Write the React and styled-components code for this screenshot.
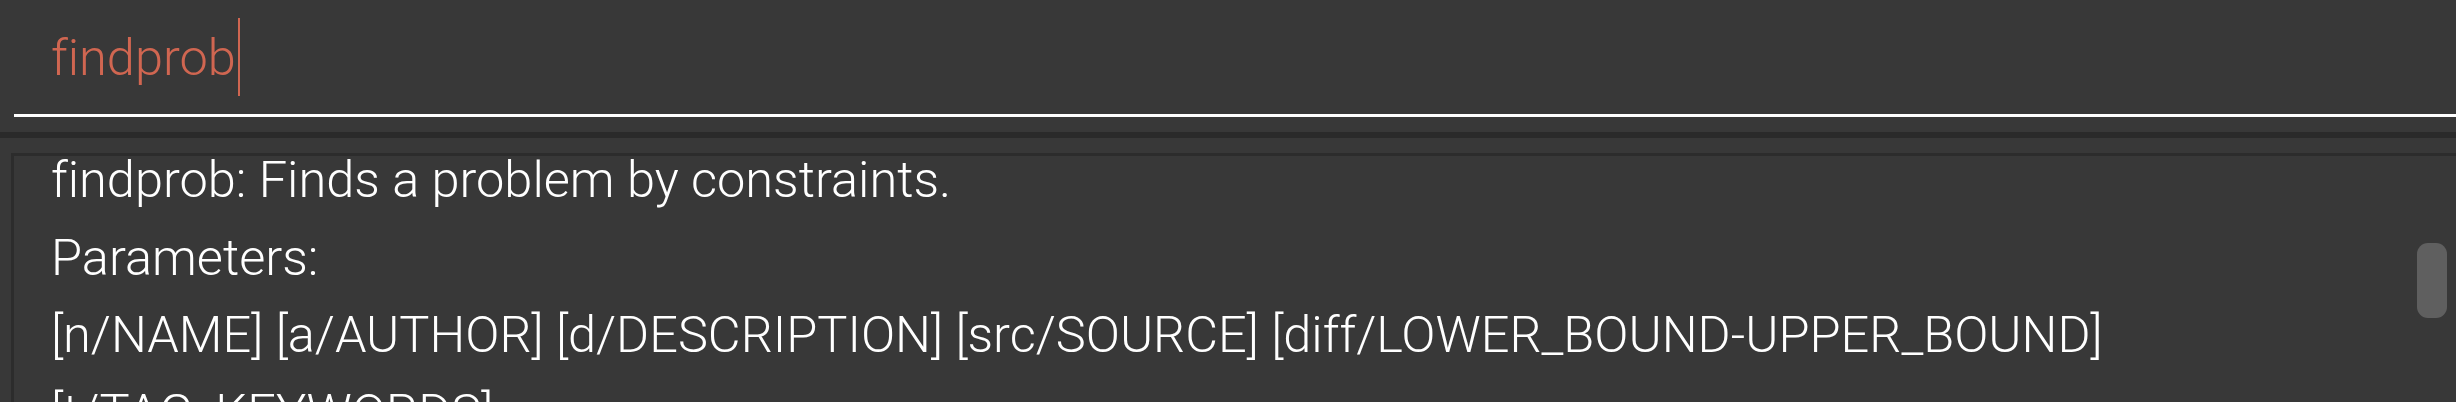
import React from "react";
import styled, { createGlobalStyle } from "styled-components";

const GlobalStyle = createGlobalStyle`
  html, body {
    margin: 0;
    padding: 0;
    height: 100%;
    overflow: hidden;
    background: #383838;
  }
  #root { height: 100%; }
`;

const Window = styled.div`
  height: 100%;
  display: flex;
  flex-direction: column;
  background: #383838;
  font-family: Roboto, "Segoe UI", sans-serif;
  font-weight: 300;
  font-size: 50.5px;
  font-variant-ligatures: none;
  font-feature-settings: "liga" 0, "clig" 0;
`;

const CommandPane = styled.div`
  flex: none;
  padding: 0 0 15px 14px;
`;

const CommandField = styled.div`
  padding: 19px 0 17px 37px;
  border-bottom: 3px solid #ffffff;
  line-height: 78px;
  height: 78px;
  white-space: nowrap;
  display: flex;
  align-items: flex-start;
`;

const CommandText = styled.span`
  color: ${(p) => (p.$error ? "#d06651" : "#ffffff")};
`;

const Caret = styled.span`
  display: inline-block;
  width: 2px;
  height: 78px;
  margin-top: -1px;
  margin-left: 2px;
  background: #d06651;
`;

const Separator = styled.div`
  height: 6px;
  background: #2a2a2a;
  flex: none;
`;

const ResultPane = styled.div`
  flex: 1;
  min-height: 0;
  overflow: hidden;
  padding: 15px 0 0 11px;
  display: flex;
`;

const ResultBox = styled.div`
  flex: 1;
  border-style: solid;
  border-color: #2c2c2c;
  border-width: 3px 0 0 3px;
  display: flex;
  align-items: flex-start;
`;

const ResultText = styled.div`
  flex: 1;
  padding-left: 37px;
  color: #ffffff;
  white-space: nowrap;
`;

const ResultLine = styled.div`
  line-height: 47.5px;
  padding-bottom: 30.2px;
`;

const ScrollTrack = styled.div`
  width: 39px;
  flex: none;
  padding-top: 87px;
`;

const ScrollThumb = styled.div`
  width: 30px;
  height: 75px;
  border-radius: 11px;
  background: #5f5f5f;
`;

const lines = [
  "findprob: Finds a problem by constraints.",
  "Parameters:",
  "[n/NAME] [a/AUTHOR] [d/DESCRIPTION] [src/SOURCE] [diff/LOWER_BOUND-UPPER_BOUND]",
  "[t/TAG_KEYWORDS]",
];

export default function App() {
  return (
    <>
      <GlobalStyle />
      <Window>
        <CommandPane>
          <CommandField>
            <CommandText $error>findprob</CommandText>
            <Caret />
          </CommandField>
        </CommandPane>
        <Separator />
        <ResultPane>
          <ResultBox>
            <ResultText>
              {lines.map((l, i) => (
                <ResultLine key={i}>{l}</ResultLine>
              ))}
            </ResultText>
            <ScrollTrack>
              <ScrollThumb />
            </ScrollTrack>
          </ResultBox>
        </ResultPane>
      </Window>
    </>
  );
}
